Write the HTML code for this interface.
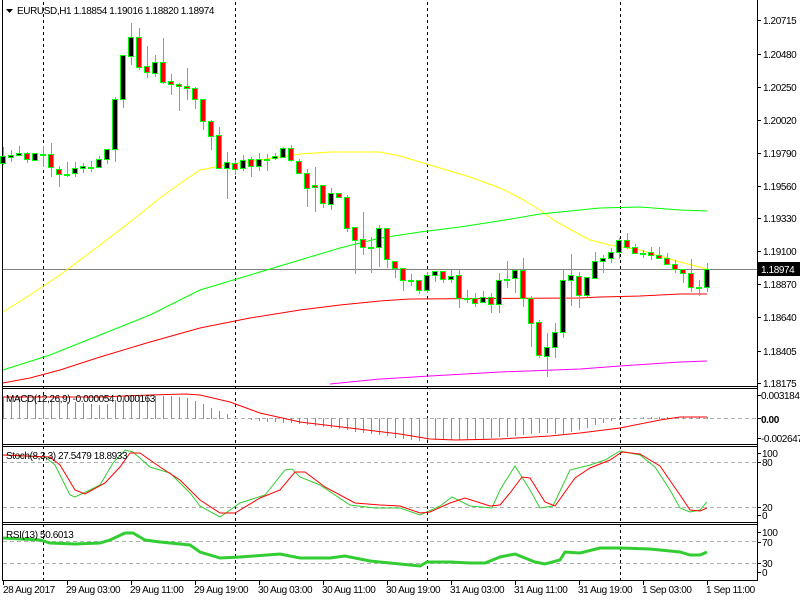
<!DOCTYPE html>
<html><head><meta charset="utf-8"><style>
html,body{margin:0;padding:0;background:#fff;}
svg{display:block;}
text{font-family:"Liberation Sans",sans-serif;font-size:10px;letter-spacing:-0.4px;fill:#000;}
</style></head><body>
<svg width="800" height="600" viewBox="0 0 800 600" xmlns="http://www.w3.org/2000/svg">
<rect width="800" height="600" fill="#fff"/>
<!-- frames -->
<g stroke="#000" stroke-width="1" fill="none">
<path d="M2.5 0V580.5M757.5 0V580.5M2 386.5H758M2 388.5H758M2 444.5H758M2 446.5H758M2 522.5H758M2 524.5H758M2 580.5H758"/>
</g>
<!-- level dashes -->
<g stroke="#b0b0b0" stroke-dasharray="4,3" fill="none">
<path d="M3 418.5H757M3 462.5H757M3 507.5H757M3 541.5H757M3 563.5H757"/>
</g>
<!-- day separators -->
<g stroke="#000" stroke-dasharray="3,3" fill="none">
<path d="M43.5 2V580M235.5 2V580M427.5 2V580M620.5 2V580"/>
</g>
<!-- current price line -->
<path d="M3 269.5H757" stroke="#808080" fill="none"/>
<!-- MAs -->
<g fill="none" stroke-width="1">
<polyline stroke="#ffff00" points="3,312 30,295 60,275 100,245 130,222 160,198 185,180 200,170 225,165 260,160 300,154 330,152 380,152 400,156 420,162 440,168 470,177 500,188 520,198 540,210 555,221 575,232 590,240 610,245 640,250 660,256 680,262 707,269"/>
<polyline stroke="#00ff00" points="3,370 50,355 100,335 150,315 200,290 250,275 300,260 340,248 380,238 420,232 460,227 505,220 540,214 560,212 600,208 640,207 680,210 707,211"/>
<polyline stroke="#ff0000" points="3,383 30,378 60,370 100,357 150,342 200,328 250,318 300,310 340,305 380,301 410,299 580,298 600,297 640,296 680,294 707,294"/>
<polyline stroke="#ff00ff" points="330,384 380,379 430,376 500,372 580,369 620,366 680,362 707,361"/>
</g>
<!-- wicks -->
<path fill="none" stroke="#00ff00" d="M3.5 147V165M11.5 150V162M19.5 146V156M27.5 152V163M35.5 153V160M43.5 146V167M51.5 143V177M59.5 166V187M67.5 162V177M75.5 162V177M83.5 163V173M91.5 161V172M99.5 156V167M107.5 149V164M115.5 97V162M123.5 55V108M131.5 23V65M139.5 28V70M147.5 46V78M155.5 55V77M163.5 38V84M171.5 74V95M179.5 83V111M187.5 68V100M195.5 87V109M203.5 99V130M211.5 120V150M219.5 127V168M227.5 152V199M235.5 160V175M243.5 155V171M251.5 157V177M259.5 153V171M267.5 154V171M275.5 153V160M283.5 147V158M291.5 145V162M299.5 159V174M307.5 169V207M315.5 167V212M323.5 185V208M331.5 188V210M339.5 193V198M347.5 195V232M355.5 227V274M363.5 212V255M371.5 237V273M379.5 225V267M387.5 228V268M395.5 261V278M403.5 268V291M411.5 274V286M419.5 280V294M427.5 272V293M435.5 271V282M443.5 271V283M451.5 270V283M459.5 270V308M467.5 290V303M475.5 293V307M483.5 291V303M491.5 293V313M499.5 273V313M507.5 261V288M515.5 269V293M523.5 258V307M531.5 296V347M539.5 320V358M547.5 333V377M555.5 323V358M563.5 270V338M571.5 254V306M579.5 272V308M587.5 277V297M595.5 252V278M603.5 255V273M611.5 248V263M619.5 238V259M627.5 233V249M635.5 244V254M643.5 250V258M651.5 247V260M659.5 247V259M667.5 253V265M675.5 260V273M683.5 269V283M691.5 259V292M699.5 280V296M707.5 263V292"/>
<!-- bull bodies -->
<g fill="#000" stroke="#00ff00">
<rect x="0.5" y="156.5" width="5" height="7"/><rect x="8.5" y="155.5" width="5" height="2"/><rect x="16.5" y="153.5" width="5" height="2"/><rect x="32.5" y="153.5" width="5" height="7"/><rect x="72.5" y="168.5" width="5" height="5"/><rect x="80.5" y="166.5" width="5" height="2"/><rect x="96.5" y="159.5" width="5" height="8"/><rect x="104.5" y="149.5" width="5" height="10"/><rect x="112.5" y="99.5" width="5" height="50"/><rect x="120.5" y="55.5" width="5" height="44"/><rect x="128.5" y="37.5" width="5" height="19"/><rect x="152.5" y="62.5" width="5" height="11"/><rect x="224.5" y="162.5" width="5" height="6"/><rect x="240.5" y="160.5" width="5" height="8"/><rect x="256.5" y="159.5" width="5" height="7"/><rect x="272.5" y="156.5" width="5" height="2"/><rect x="280.5" y="148.5" width="5" height="9"/><rect x="328.5" y="193.5" width="5" height="11"/><rect x="376.5" y="228.5" width="5" height="19"/><rect x="424.5" y="275.5" width="5" height="15"/><rect x="432.5" y="271.5" width="5" height="4"/><rect x="448.5" y="276.5" width="5" height="3"/><rect x="480.5" y="297.5" width="5" height="5"/><rect x="496.5" y="280.5" width="5" height="24"/><rect x="512.5" y="270.5" width="5" height="8"/><rect x="544.5" y="347.5" width="5" height="9"/><rect x="552.5" y="332.5" width="5" height="15"/><rect x="560.5" y="280.5" width="5" height="52"/><rect x="568.5" y="275.5" width="5" height="5"/><rect x="584.5" y="277.5" width="5" height="18"/><rect x="592.5" y="261.5" width="5" height="17"/><rect x="600.5" y="258.5" width="5" height="3"/><rect x="608.5" y="252.5" width="5" height="6"/><rect x="616.5" y="240.5" width="5" height="12"/><rect x="704.5" y="269.5" width="5" height="18"/>
</g>
<!-- bear bodies -->
<g fill="#ff0000" stroke="#00ff00">
<rect x="24.5" y="153.5" width="5" height="6"/><rect x="48.5" y="154.5" width="5" height="13"/><rect x="56.5" y="169.5" width="5" height="5"/><rect x="136.5" y="37.5" width="5" height="30"/><rect x="144.5" y="66.5" width="5" height="6"/><rect x="160.5" y="62.5" width="5" height="20"/><rect x="168.5" y="81.5" width="5" height="3"/><rect x="176.5" y="84.5" width="5" height="2"/><rect x="184.5" y="86.5" width="5" height="2"/><rect x="192.5" y="88.5" width="5" height="11"/><rect x="200.5" y="99.5" width="5" height="22"/><rect x="208.5" y="121.5" width="5" height="15"/><rect x="216.5" y="135.5" width="5" height="33"/><rect x="232.5" y="163.5" width="5" height="6"/><rect x="248.5" y="159.5" width="5" height="7"/><rect x="288.5" y="148.5" width="5" height="12"/><rect x="296.5" y="161.5" width="5" height="12"/><rect x="304.5" y="173.5" width="5" height="15"/><rect x="312.5" y="185.5" width="5" height="2"/><rect x="320.5" y="185.5" width="5" height="18"/><rect x="336.5" y="193.5" width="5" height="4"/><rect x="344.5" y="197.5" width="5" height="31"/><rect x="352.5" y="227.5" width="5" height="13"/><rect x="360.5" y="239.5" width="5" height="8"/><rect x="368.5" y="247.5" width="5" height="1"/><rect x="384.5" y="228.5" width="5" height="31"/><rect x="392.5" y="261.5" width="5" height="7"/><rect x="400.5" y="268.5" width="5" height="12"/><rect x="416.5" y="280.5" width="5" height="10"/><rect x="440.5" y="271.5" width="5" height="8"/><rect x="456.5" y="275.5" width="5" height="23"/><rect x="472.5" y="298.5" width="5" height="5"/><rect x="488.5" y="297.5" width="5" height="7"/><rect x="520.5" y="270.5" width="5" height="28"/><rect x="528.5" y="298.5" width="5" height="25"/><rect x="536.5" y="322.5" width="5" height="33"/><rect x="576.5" y="276.5" width="5" height="19"/><rect x="624.5" y="240.5" width="5" height="7"/><rect x="632.5" y="247.5" width="5" height="6"/><rect x="648.5" y="252.5" width="5" height="3"/><rect x="656.5" y="255.5" width="5" height="3"/><rect x="664.5" y="258.5" width="5" height="6"/><rect x="672.5" y="264.5" width="5" height="5"/><rect x="680.5" y="269.5" width="5" height="4"/><rect x="688.5" y="273.5" width="5" height="14"/>
</g>
<!-- doji -->
<g fill="#00ff00" stroke="#00ff00">
<rect x="40.5" y="154.5" width="5" height="1"/><rect x="64.5" y="174.5" width="5" height="1"/><rect x="88.5" y="167.5" width="5" height="1"/><rect x="264.5" y="159.5" width="5" height="1"/><rect x="408.5" y="280.5" width="5" height="1"/><rect x="464.5" y="298.5" width="5" height="1"/><rect x="504.5" y="279.5" width="5" height="1"/><rect x="640.5" y="253.5" width="5" height="1"/><rect x="696.5" y="287.5" width="5" height="1"/>
</g>
<!-- MACD histogram -->
<path fill="none" stroke="#32cd32" d="M3.5 419V397M11.5 419V397M19.5 419V397M27.5 419V397M35.5 419V397M43.5 419V398M51.5 419V400M59.5 419V401M67.5 419V402M75.5 419V402M83.5 419V403M91.5 419V404M99.5 419V405M107.5 419V404M115.5 419V400M123.5 419V397M131.5 419V396M139.5 419V396M147.5 419V396M155.5 419V396M163.5 419V396M171.5 419V396M179.5 419V397M187.5 419V398M195.5 419V401M203.5 419V404M211.5 419V408M219.5 419V411M227.5 419V414M235.5 419V417M251.5 418V420M259.5 418V421M267.5 418V422M275.5 418V422M283.5 418V423M291.5 418V423M299.5 418V424M307.5 418V425M315.5 418V426M323.5 418V427M331.5 418V428M339.5 418V429M347.5 418V430M355.5 418V432M363.5 418V433M371.5 418V434M379.5 418V435M387.5 418V436M395.5 418V438M403.5 418V439M411.5 418V440M419.5 418V441M427.5 418V440M435.5 418V440M443.5 418V440M451.5 418V440M459.5 418V440M467.5 418V440M475.5 418V440M483.5 418V439M491.5 418V438M499.5 418V437M507.5 418V437M515.5 418V436M523.5 418V435M531.5 418V434M539.5 418V433M547.5 418V433M555.5 418V434M563.5 418V434M571.5 418V432M579.5 418V430M587.5 418V428M595.5 418V425M603.5 418V423M611.5 418V421M619.5 418V420M627.5 418V419M643.5 419V417M651.5 419V417M659.5 419V417M667.5 419V417M675.5 419V417M683.5 419V417M691.5 419V417M699.5 419V417M707.5 419V417"/>
<polyline fill="none" stroke="#ff0000" points="3,397 100,397 150,395 185,394 200,395 230,402 260,413 300,422 400,434 430,439 456,440 500,439 550,436 580,433 620,428 660,420 680,417 707,417"/>
<!-- Stoch -->
<polyline fill="none" stroke="#32cd32" points="3,455 45,457 55,465 70,495 75,497 90,490 100,485 113,463 125,450 133,452 150,467 170,473 190,493 200,506 220,517 240,503 265,495 285,470 292,469 300,477 320,485 350,505 375,508 400,508 420,515 440,506 452,497 470,506 492,508 500,490 515,466 530,490 540,508 553,506 570,470 590,465 605,460 620,451 640,455 655,467 670,490 680,508 690,512 700,510 707,502"/>
<polyline fill="none" stroke="#ff0000" points="3,455 50,457 60,465 75,490 85,494 105,483 120,467 130,453 140,453 160,467 180,480 200,500 220,513 235,513 260,498 280,490 295,472 305,472 325,487 355,503 380,505 400,506 420,513 430,512 450,503 465,498 490,506 500,505 510,493 522,477 530,478 545,502 555,506 575,478 590,468 610,460 622,452 640,454 660,466 680,495 690,510 700,511 707,508"/>
<!-- RSI -->
<polyline fill="none" stroke="#32cd32" stroke-width="3" points="3,538 40,540 50,543 75,544 100,543 110,540 125,533 133,533 145,540 160,542 190,545 200,552 220,558 240,557 280,554 300,558 330,558 345,556 370,561 400,564 420,566 427,562 450,562 470,563 485,563 500,557 515,554 535,562 545,564 560,560 565,552 580,553 600,548 620,548 650,549 680,552 690,555 700,555 707,552"/>
<!-- axis ticks -->
<path fill="none" stroke="#000" d="M757 20.5H761M757 54.5H761M757 87.5H761M757 120.5H761M757 153.5H761M757 186.5H761M757 218.5H761M757 251.5H761M757 284.5H761M757 317.5H761M757 351.5H761M757 383.5H761M757 395.5H761M757 418.5H761M757 438.5H761M757 453.5H761M757 462.5H761M757 507.5H761M757 515.5H761M757 532.5H761M757 542.5H761M757 563.5H761M757 572.5H761M3.5 580V585M67.5 580V585M131.5 580V585M195.5 580V585M259.5 580V585M323.5 580V585M387.5 580V585M451.5 580V585M515.5 580V585M579.5 580V585M643.5 580V585M707.5 580V585"/>
<g>
<text x="763" y="24">1.20715</text><text x="763" y="58">1.20480</text><text x="763" y="91">1.20250</text><text x="763" y="124">1.20020</text><text x="763" y="157">1.19790</text><text x="763" y="190">1.19560</text><text x="763" y="222">1.19330</text><text x="763" y="255">1.19100</text><text x="763" y="288">1.18870</text><text x="763" y="321">1.18640</text><text x="763" y="355">1.18405</text><text x="763" y="387">1.18175</text>
<text x="761" y="399">0.003184</text><text x="761" y="423" font-weight="bold">0.00</text><text x="761" y="442">-0.002647</text>
<text x="762" y="457">100</text><text x="762" y="466">80</text><text x="762" y="511">20</text><text x="762" y="519">0</text>
<text x="762" y="536">100</text><text x="762" y="546">70</text><text x="762" y="567">30</text><text x="762" y="576">0</text>
</g>
<rect x="758" y="262" width="42" height="14" fill="#000"/>
<text x="761" y="273" style="fill:#fff">1.18974</text>
<!-- titles -->
<path d="M6 9H13L9.5 13Z" fill="#000"/>
<text x="17" y="14">EURUSD,H1  1.18854 1.19016 1.18820 1.18974</text>
<text x="6" y="402">MACD(12,26,9) -0.000054 0.000163</text>
<text x="6" y="459">Stoch(8,3,3) 27.5479 18.8933</text>
<text x="6" y="538">RSI(13) 50.6013</text>
<!-- time axis -->
<g>
<text x="3" y="593">28 Aug 2017</text><text x="66" y="593">29 Aug 03:00</text><text x="130" y="593">29 Aug 11:00</text><text x="194" y="593">29 Aug 19:00</text><text x="258" y="593">30 Aug 03:00</text><text x="322" y="593">30 Aug 11:00</text><text x="386" y="593">30 Aug 19:00</text><text x="450" y="593">31 Aug 03:00</text><text x="514" y="593">31 Aug 11:00</text><text x="578" y="593">31 Aug 19:00</text><text x="642" y="593">1 Sep 03:00</text><text x="706" y="593">1 Sep 11:00</text>
</g>
</svg>
</body></html>
